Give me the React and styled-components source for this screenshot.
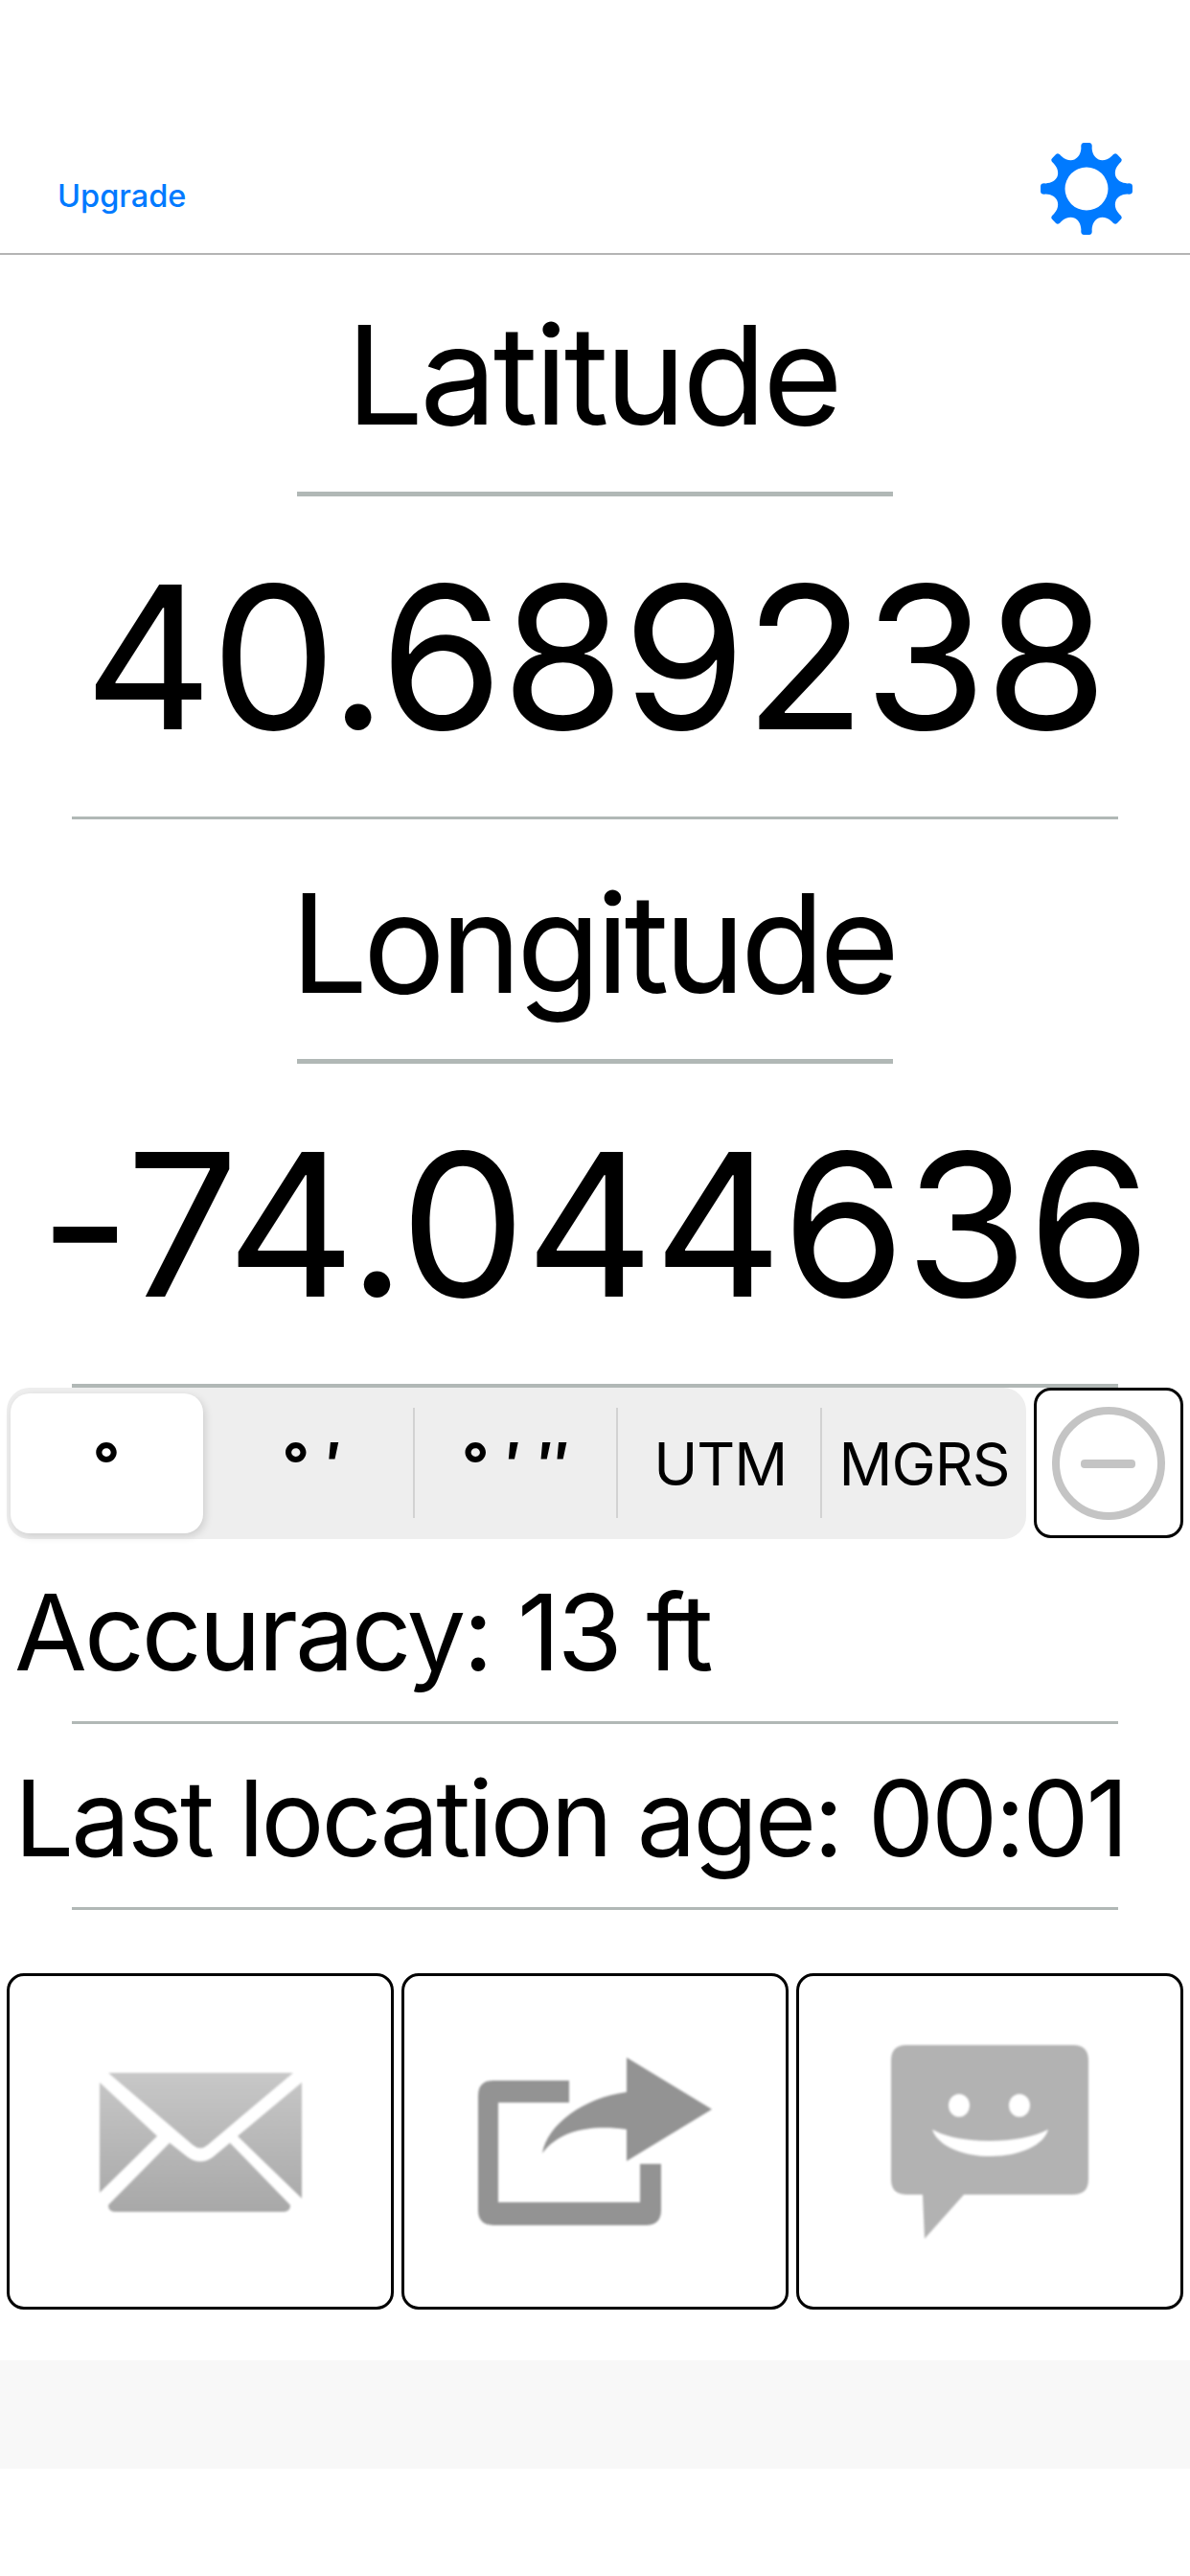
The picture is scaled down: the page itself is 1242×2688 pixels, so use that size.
import React from 'react'
import styled, { createGlobalStyle } from 'styled-components'

const GlobalStyle = createGlobalStyle`
    html, body {
        margin: 0;
        padding: 0;
        background: #fff;
    }
    body {
        font-family: Inter, "Liberation Sans", sans-serif;
        color: #000;
    }
`

const Page = styled.div`
    width: 1242px;
    height: 2688px;
    background: #fff;
    overflow: hidden;
`

const NavBar = styled.header`
    height: 264px;
    box-sizing: content-box;
    border-bottom: 2px solid #b4b4b4;
    display: flex;
    justify-content: space-between;
    align-items: flex-end;
    padding: 0 60px 0 60px;
`

const Upgrade = styled.a`
    color: #007aff;
    font-size: 32.5px;
    font-weight: 500;
    line-height: 40px;
    margin-bottom: 39px;
`

const GearSlot = styled.div`
    width: 96px;
    height: 96px;
    margin-bottom: 19px;
    svg {
        display: block;
    }
`

const Label = styled.h1`
    margin: 0;
    height: ${props => props.$height}px;
    box-sizing: border-box;
    padding: 0 5px ${props => props.$lift}px 0;
    display: flex;
    justify-content: center;
    align-items: flex-end;
    font-weight: 400;
    font-size: 143px;
    letter-spacing: ${props => props.$spacing}px;
    line-height: 160px;
`

const ShortRule = styled.hr`
    margin: 0 auto;
    border: 0;
    width: 622px;
    height: 5px;
    background: #b1b8b6;
`

const Reading = styled.div`
    height: 334px;
    display: flex;
    justify-content: center;
    align-items: center;
    font-size: 208px;
    letter-spacing: ${props => props.$spacing}px;
    white-space: nowrap;
`

const LongRule = styled.hr`
    margin: 0 auto;
    border: 0;
    width: 1092px;
    height: ${props => props.$thick ? 4 : 3}px;
    background: #b1b8b6;
`

const Toolbar = styled.div`
    display: flex;
    gap: 8px;
    padding: 0 7px;
    height: 158px;
`

const Segmented = styled.div`
    width: 1064px;
    display: grid;
    grid-template-columns: repeat(5, 1fr);
    background: #eeeeee;
    border-radius: 24px;
`

const Segment = styled.div`
    position: relative;
    display: flex;
    align-items: center;
    justify-content: center;
    font-size: 62px;
    font-weight: ${props => props.$symbol ? 700 : 400};
    letter-spacing: ${props => props.$symbol ? '1px' : '-1px'};
    white-space: nowrap;
    ${props => props.$selected && `
        margin: 6px 8px 6px 4px;
        background: #fff;
        border-radius: 20px;
        box-shadow: 2px 3px 8px rgba(0, 0, 0, 0.14);
    `}
    ${props => props.$divider && `
        &::before {
            content: "";
            position: absolute;
            left: -2px;
            top: 21px;
            height: 115px;
            width: 2px;
            background: #d2d2d2;
        }
    `}
`

const SquareButton = styled.button`
    box-sizing: border-box;
    padding: 0;
    background: #fff;
    border: 3px solid #000;
    border-radius: 18px;
    display: flex;
    align-items: center;
    justify-content: center;
`

const MinusButton = styled(SquareButton)`
    width: 156px;
    height: 157px;
`

const StatusRow = styled.div`
    height: ${props => props.$height}px;
    box-sizing: border-box;
    padding: 4px 0 0 15px;
    display: flex;
    align-items: center;
    font-size: 110px;
    letter-spacing: -3px;
    white-space: nowrap;
`

const Actions = styled.div`
    display: flex;
    gap: 8px;
    padding: 0 7px;
    margin-top: 66px;
`

const ActionButton = styled(SquareButton)`
    width: 404px;
    height: 351px;
    svg {
        filter: blur(1px);
    }
`

const AdBand = styled.div`
    margin-top: 53px;
    height: 113px;
    background: #f8f8f8;
`

const polar = (r, deg) => {
    const rad = (deg - 90) * Math.PI / 180
    return `${(48 + r * Math.cos(rad)).toFixed(2)} ${(48 + r * Math.sin(rad)).toFixed(2)}`
}

const gearPath = () => {
    let d = `M${polar(33, -22.5)}`
    for (let i = 0; i < 8; i++) {
        const a = i * 45
        d += ` C${polar(33.5, a - 15)} ${polar(37, a - 9)} ${polar(43, a - 7.5)}`
        d += ` Q${polar(48.5, a - 7.5)} ${polar(48, a - 3)}`
        d += ` L${polar(48, a + 3)}`
        d += ` Q${polar(48.5, a + 7.5)} ${polar(43, a + 7.5)}`
        d += ` C${polar(37, a + 9)} ${polar(33.5, a + 15)} ${polar(33, a + 22.5)}`
    }
    d += ' Z M48 25.5 A22.5 22.5 0 1 0 48 70.5 A22.5 22.5 0 1 0 48 25.5 Z'
    return d
}

const Gear = () => (
    <svg width="96" height="96" viewBox="0 0 96 96">
        <path d={gearPath()} fill="#007aff" fillRule="evenodd" />
    </svg>
)

const MinusCircle = () => (
    <svg width="118" height="118" viewBox="0 0 118 118">
        <circle cx="59" cy="59" r="55" fill="none" stroke="#c4c4c4" strokeWidth="8" />
        <rect x="30" y="55" width="57" height="9" rx="4" fill="#c4c4c4" />
    </svg>
)

const MailIcon = () => (
    <svg width="211" height="147" viewBox="0 0 211 147">
        <defs>
            <linearGradient id="mailFill" gradientUnits="userSpaceOnUse" x1="0" y1="0" x2="0" y2="147">
                <stop offset="0" stopColor="#c8c8c8" />
                <stop offset="1" stopColor="#a8a8a8" />
            </linearGradient>
        </defs>
        <g fill="url(#mailFill)">
            <path d="M9 2H202L113 77Q105 84 97 77Z" />
            <path d="M0 12L60 68L0 127Z" />
            <path d="M211 12L144 68L211 133Z" />
            <path d="M73 75L92 90Q105 99 118 90L136 75L199 140Q199 147 192 147H16Q9 147 9 140Z" />
        </g>
    </svg>
)

const ShareIcon = () => (
    <svg width="244" height="175" viewBox="0 0 244 175">
        <g fill="#939393">
            <path d="M95 24H16Q0 24 0 40V159Q0 175 16 175H175Q191 175 191 159V111H169V151H21V47H95Z" />
            <path d="M155 0L244 54L155 108V75C120 70 85 75 67 100C72 70 110 42 155 36Z" />
        </g>
    </svg>
)

const ChatIcon = () => (
    <svg width="206" height="202" viewBox="0 0 206 202">
        <path fill="#b2b2b2" d="M16 0H190Q206 0 206 16V140Q206 156 190 156H76L35 202L33 156H16Q0 156 0 140V16Q0 0 16 0Z" />
        <ellipse cx="71" cy="63" rx="11" ry="12" fill="#fff" />
        <ellipse cx="134" cy="63" rx="11" ry="12" fill="#fff" />
        <path fill="#fff" d="M43 88C70 104 135 104 164 88C160 104 135 116 104 116C72 116 48 104 43 88Z" />
    </svg>
)

const App = () => {
    return (
        <Page>
            <GlobalStyle />
            <NavBar>
                <Upgrade>Upgrade</Upgrade>
                <GearSlot><Gear /></GearSlot>
            </NavBar>

            <Label $height={247} $lift={42} $spacing={-3.8}>Latitude</Label>
            <ShortRule />
            <Reading $spacing={-2.1}>40.689238</Reading>
            <LongRule />

            <Label $height={250} $lift={41} $spacing={-5}>Longitude</Label>
            <ShortRule />
            <Reading $spacing={-0.5}>-74.044636</Reading>
            <LongRule $thick />

            <Toolbar>
                <Segmented>
                    <Segment $selected $symbol>°</Segment>
                    <Segment $symbol>° ′</Segment>
                    <Segment $symbol $divider>° ′ ″</Segment>
                    <Segment $divider>UTM</Segment>
                    <Segment $divider>MGRS</Segment>
                </Segmented>
                <MinusButton><MinusCircle /></MinusButton>
            </Toolbar>

            <StatusRow $height={190}>Accuracy: 13 ft</StatusRow>
            <LongRule />
            <StatusRow $height={191}>Last location age: 00:01</StatusRow>
            <LongRule />

            <Actions>
                <ActionButton><MailIcon /></ActionButton>
                <ActionButton><ShareIcon /></ActionButton>
                <ActionButton><ChatIcon /></ActionButton>
            </Actions>

            <AdBand />
        </Page>
    )
}

export default App
